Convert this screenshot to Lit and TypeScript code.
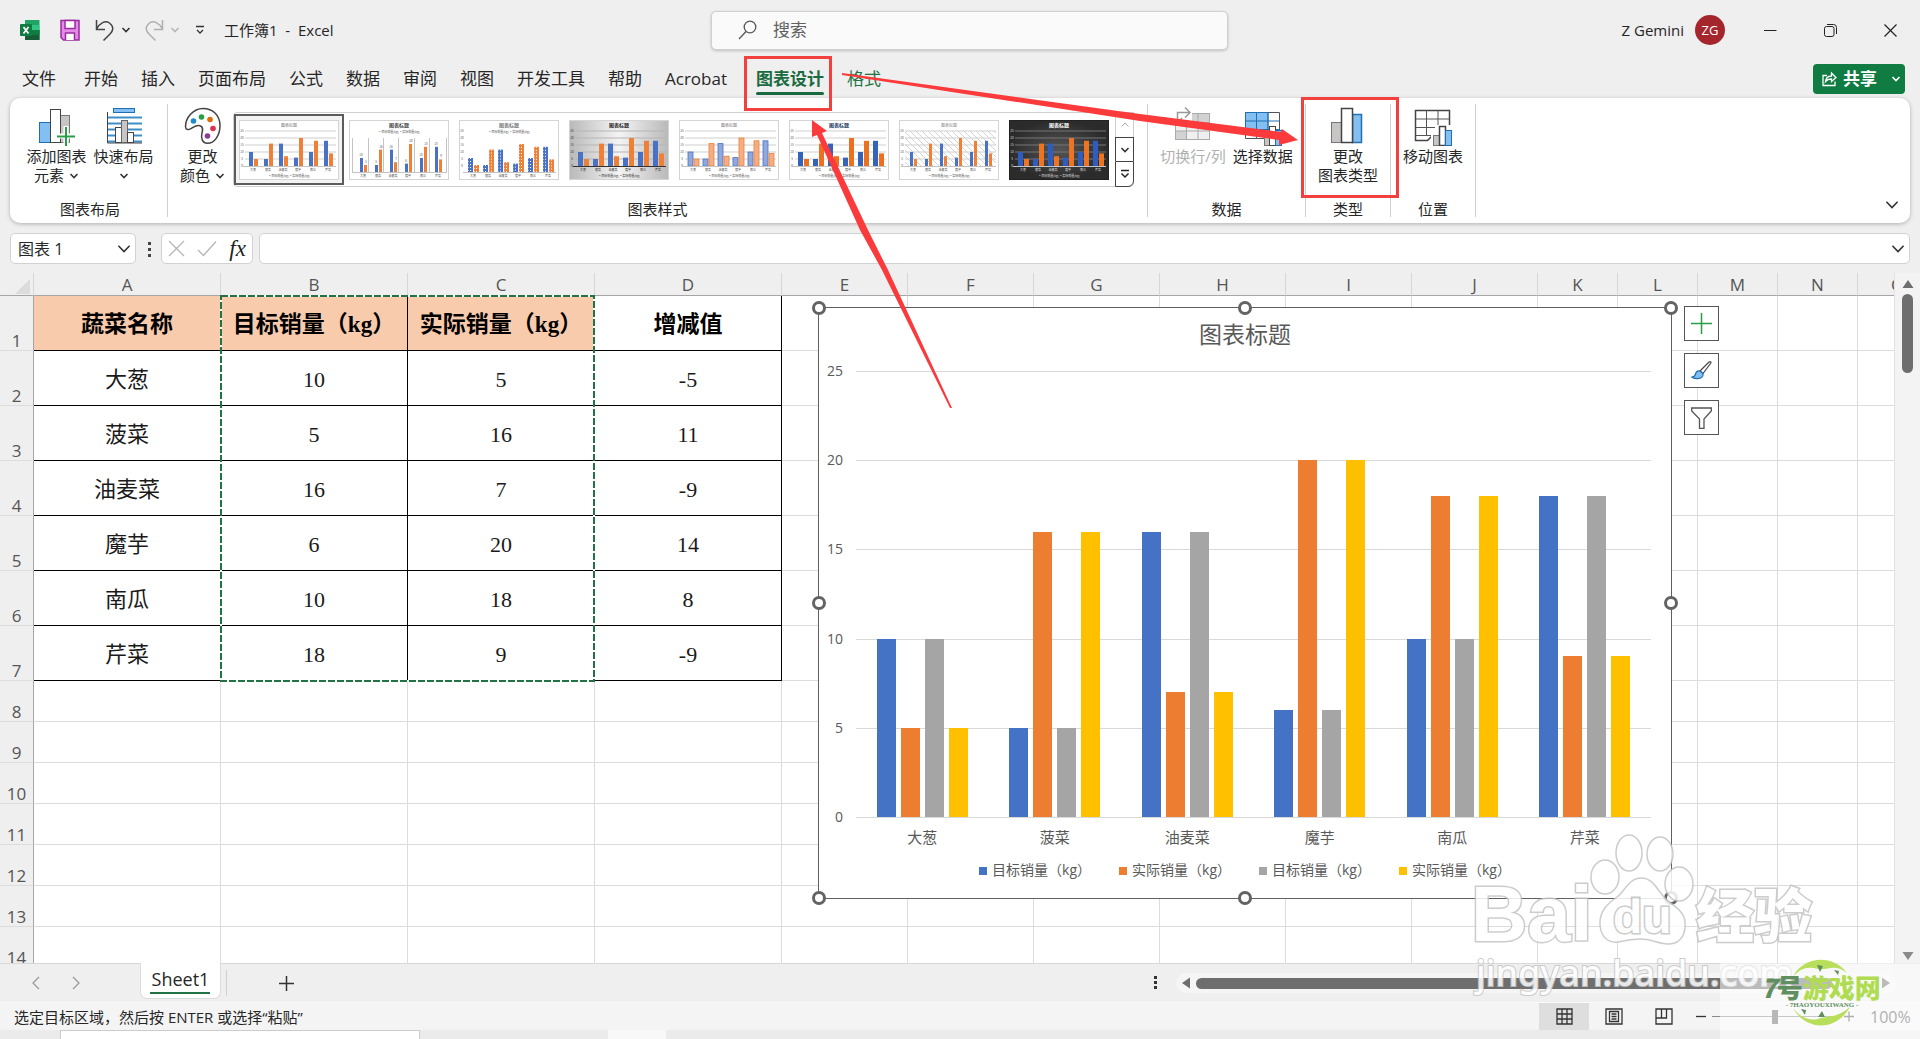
import { LitElement, html, svg, css, nothing } from "lit";
import { customElement, property } from "lit/decorators.js";
import { classMap } from "lit/directives/class-map.js";
import { styleMap } from "lit/directives/style-map.js";

const chevron = (cls = "") => html`<svg class="chev ${cls}" viewBox="0 0 10 10" aria-hidden="true"><path d="M1.5 3 5 6.6 8.5 3" /></svg>`;

const TABS = ["文件", "开始", "插入", "页面布局", "公式", "数据", "审阅", "视图", "开发工具", "帮助", "Acrobat", "图表设计", "格式"];

const ROWS: Array<[string, number, number]> = [
  ["大葱", 10, 5],
  ["菠菜", 5, 16],
  ["油麦菜", 16, 7],
  ["魔芋", 6, 20],
  ["南瓜", 10, 18],
  ["芹菜", 18, 9],
];

const HEADINGS = ["蔬菜名称", "目标销量（kg）", "实际销量（kg）", "增减值"];

const COLUMNS: Array<[string, number]> = [
  ["A", 187], ["B", 187], ["C", 187], ["D", 187],
  ["E", 126], ["F", 126], ["G", 126], ["H", 126], ["I", 126], ["J", 126],
  ["K", 80], ["L", 80], ["M", 80], ["N", 80], ["O", 80],
];

const icons = {
  addElement: svg`
    <rect x="3.5" y="16.5" width="11" height="20" fill="#83c0f1" stroke="#1f6fb5" />
    <rect x="24.5" y="9.5" width="9" height="27" fill="#c8c6c4" stroke="#777" />
    <rect x="14.5" y="3.5" width="10" height="33" fill="#fff" stroke="#444" />
    <path d="M30 20v20M21 30h18" stroke="#fff" stroke-width="5" />
    <path d="M30 21v19M21 30.500h18" stroke="#2a9d48" stroke-width="2" />`,
  quickLayout: svg`
    <path d="M3 11.500h35M3 17.500h35M3 23.500h35M3 29.500h35M3 35.500h35" stroke="#3e8fc9" stroke-width="2" />
    <rect x="9.500" y="2.500" width="21" height="4" fill="#83c0f1" stroke="#1f6fb5" />
    <path d="M3.500 6v31H38" stroke="#444" />
    <rect x="11.500" y="21.500" width="6" height="15" fill="#fff" stroke="#444" />
    <rect x="17.500" y="14.500" width="6" height="22" fill="#c8c6c4" stroke="#666" />
    <rect x="23.500" y="26.500" width="6" height="10" fill="#fff" stroke="#444" />`,
  palette: svg`
    <path d="M20 2.500C10 2.500 2.500 12 2.500 20.500c0 3 2.500 3.800 5 2.400 4-2.300 6-4.300 9.500-3.200 4 1.200 2.500 5 1.800 8.300-.8 4 .2 9.300 5.700 9.300 7 0 12.500-8 12.500-17.800C37 9.500 30 2.500 20 2.500z" fill="#fff" stroke="#444" stroke-width="1.500" />
    <circle cx="10.500" cy="15" r="2.800" fill="#1e8bcd" /><circle cx="18.500" cy="11" r="2.800" fill="#2a9d48" />
    <circle cx="27" cy="13.500" r="2.800" fill="#e36c0a" /><circle cx="30" cy="22.500" r="2.800" fill="#e0304c" />
    <circle cx="24.500" cy="30" r="2.800" fill="#8e3a9d" />`,
  switchRowCol: svg`
    <path d="M2.500 12.500h34v26h-34z" fill="#f0f0f0" stroke="#aaa" transform="translate(0 -5)" />
    <path d="M14 7.500h22.500v9H14zM2.500 25h11v8.500h-11z" fill="#d2d2d2" />
    <path d="M2.500 16.500h34M2.500 25h34M13.500 7.500v26M25 7.500v26M2.500 7.500h34v26h-34z" stroke="#aaa" />
    <path d="M2 3h17v13H2z" fill="#fff" />
    <path d="M4.500 14V6.500H17M12 1.500l5 5-5 5M9 12l-4 4" stroke="#999" stroke-width="1.500" />`,
  selectData: svg`
    <path d="M2.500 6.500h34v26h-34z" fill="#fff" stroke="#555" />
    <path d="M2.500 6.500h22.500v17H2.500z" fill="#83c0f1" stroke="#1f6fb5" />
    <path d="M2.500 15h34M2.500 23.500h34M13.500 6.500v26M25 6.500v26" stroke="#1f6fb5" />
    <rect x="21.500" y="29.500" width="5" height="10" fill="#c8c6c4" stroke="#777" />
    <rect x="26.500" y="20.500" width="6" height="19" fill="#fff" stroke="#444" />
    <rect x="32.500" y="24.500" width="6" height="15" fill="#83c0f1" stroke="#1f6fb5" />`,
  changeType: svg`
    <rect x="3.500" y="16.500" width="10" height="20" fill="#c8c6c4" stroke="#777" />
    <rect x="24.500" y="8.500" width="9" height="28" fill="#83c0f1" stroke="#1f6fb5" stroke-width="1.500" />
    <rect x="13.500" y="2.500" width="11" height="34" fill="#fff" stroke="#444" stroke-width="1.500" />`,
  moveChart: svg`
    <path d="M2.500 4.500h34v25h-17l-5 5h-12z" fill="#fff" stroke="#444" stroke-width="1.500" />
    <path d="M2.500 13h34M2.500 21.500h34M2.500 29.500h17M13.500 4.500v25M25 4.500v25" stroke="#555" />
    <path d="M18 25h4v-6h16v21H18z" fill="#fff" />
    <rect x="20.500" y="29.500" width="6" height="10" fill="#c8c6c4" stroke="#777" />
    <rect x="26.500" y="20.500" width="6" height="19" fill="#fff" stroke="#444" stroke-width="1.500" />
    <rect x="32.500" y="24.500" width="6" height="15" fill="#83c0f1" stroke="#1f6fb5" />`,
};

interface ThumbStyle {
  bg: string; title: string; grid: string; label: string;
  blue: string; orange: string; barWidth: number;
  topLegend?: boolean; vertical?: boolean; dashed?: boolean; hatch?: boolean; noGrid?: boolean; outline?: boolean; bold?: boolean;
}

const BASE: ThumbStyle = { bg: "#ffffff", title: "#777", grid: "#cfcfcf", label: "#555", blue: "#4a72c4", orange: "#ee8137", barWidth: 4 };
const THUMBS: ThumbStyle[] = [
  BASE,
  { ...BASE, topLegend: true, vertical: true, barWidth: 3, bold: true, title: "#444" },
  { ...BASE, topLegend: true, dashed: true, noGrid: true, bold: true, barWidth: 5 },
  { ...BASE, bg: "shade", title: "#222", grid: "#b5b5b5", label: "#333", barWidth: 5, bold: true },
  { ...BASE, blue: "#91a8dc", orange: "#f4ad84", outline: true, barWidth: 5 },
  { ...BASE, title: "#203864", bold: true, barWidth: 5, blue: "#3563b8", orange: "#ed7020" },
  { ...BASE, hatch: true, barWidth: 3, title: "#888" },
  { ...BASE, bg: "dark", title: "#fff", grid: "#777", label: "#ddd", barWidth: 5, bold: true, blue: "#2f5cc0", orange: "#ee7322" },
];

@customElement("chart-thumb")
class ChartThumb extends LitElement {
  @property({ attribute: false }) look: ThumbStyle = BASE;

  static styles = css`
    :host { display: block; width: 100px; height: 60px; }
    svg { display: block; width: 100%; height: 100%; }
    text { font-family: "Noto Sans CJK SC", sans-serif; text-anchor: middle; font-size: 3px; }
    .title { font-size: 4px; }
    .title.bold { font-size: 5px; font-weight: 700; }
  `;

  render() {
    const t = this.look;
    const fill = t.bg === "shade" ? "url(#shade)" : t.bg === "dark" ? "url(#dark)" : t.bg;
    const unit = 1.4;
    const bar = (x: number, v: number, color: string, edge: string) => svg`
      <rect x=${x} y=${46 - v * unit} width=${t.barWidth} height=${v * unit} fill=${color}
        stroke=${t.outline ? edge : "none"} stroke-width="0.8" />
      ${t.dashed ? svg`<path d="M${x} ${46 - v * unit}V46M${x + t.barWidth / 2} ${46 - v * unit}V46" stroke="#fff" stroke-width="1" stroke-dasharray="1 2" />` : nothing}`;
    return html`<svg viewBox="0 0 100 60" aria-hidden="true">
      <defs>
        <linearGradient id="shade" x1="0" x2="1"><stop offset="0" stop-color="#b9b9b9" /><stop offset=".5" stop-color="#f4f4f4" /><stop offset="1" stop-color="#b9b9b9" /></linearGradient>
        <radialGradient id="dark"><stop offset="0" stop-color="#555" /><stop offset="1" stop-color="#2b2b2b" /></radialGradient>
        <pattern id="hatch" width="6" height="6" patternUnits="userSpaceOnUse"><path d="M0 0l6 6" stroke="#c9c9c9" stroke-width="0.8" /></pattern>
      </defs>
      <rect x="0.5" y="0.5" width="99" height="59" fill=${fill} stroke=${t.bg === "dark" ? "#222" : "#d4d4d4"} />
      <text class=${classMap({ title: true, bold: !!t.bold })} x="50" y="7" fill=${t.title}>图表标题</text>
      ${t.topLegend ? svg`<text x="50" y="13" fill=${t.label}>▪目标销量(kg) ▪实际销量(kg)</text>` : svg`<text x="50" y="57" fill=${t.label}>▪目标销量(kg) ▪实际销量(kg)</text>`}
      ${t.hatch ? svg`<rect x="6" y="11" width="91" height="35" fill="url(#hatch)" />` : nothing}
      ${t.vertical || t.noGrid ? nothing : [11, 18, 25, 32, 39].map((y) => svg`<path d="M6 ${y}H97" stroke=${t.grid} />`)}
      ${t.vertical ? [3, 19, 34, 49, 65, 80, 97].map((x) => svg`<path d="M${x}.5 18V53" stroke="#c4c4c4" />`) : nothing}
      ${t.vertical ? nothing : [25, 20, 15, 10, 5, 0].map((v, i) => svg`<text x="3" y=${12 + i * 7} fill=${t.label}>${v}</text>`)}
      <g transform=${t.topLegend ? "translate(0 6)" : "translate(0 0)"}>
        ${ROWS.map(([name, a, b], i) => {
          const cx = 14 + i * 15;
          return svg`${bar(cx - t.barWidth, a, t.blue, "#4a72c4")}${bar(cx + 1, b, t.orange, "#ee8137")}
            ${t.vertical ? svg`<text x=${cx - 2} y=${44 - a * unit} fill=${t.label}>${a}</text><text x=${cx + 3} y=${44 - b * unit} fill=${t.label}>${b}</text>` : nothing}
            <text x=${cx} y="51" fill=${t.label}>${name}</text>`;
        })}
        <path d="M4 46.5H97" stroke=${t.bg === "shade" ? "#333" : "#c4c4c4"} />
      </g>
    </svg>`;
  }
}

@customElement("bar-chart")
class BarChart extends LitElement {
  static styles = css`
    :host {
      display: flex; flex-direction: column; box-sizing: border-box; position: relative;
      border: 1px solid #5f5f5f; background: #fff; color: #595959;
      font: 15px/20px "Open Sans", "Noto Sans CJK SC", sans-serif;
    }
    .title { margin: 0; height: 63px; padding-top: 10px; box-sizing: border-box; font-size: 23px; line-height: 32px; font-weight: 400; text-align: center; }
    .body { flex: 1; display: grid; grid-template-columns: 24px 1fr; column-gap: 13px; padding-right: 20px; min-height: 0; }
    .axis { display: flex; flex-direction: column; justify-content: space-between; text-align: right; margin: -10px 0 -9px; font-size: 14px; }
    .plot { position: relative; display: flex; }
    .lines { position: absolute; inset: 0; display: flex; flex-direction: column; justify-content: space-between; }
    .lines i { height: 1px; background: #d9d9d9; }
    .group { flex: 1; display: flex; justify-content: center; align-items: flex-end; gap: 5px; padding-bottom: 1px; position: relative; }
    .bar { width: 19px; }
    .s0 { background: #4472c4; } .s1 { background: #ed7d31; } .s2 { background: #a5a5a5; } .s3 { background: #ffc000; }
    .cats { display: flex; height: 40px; line-height: 38px; padding: 0 20px 0 37px; }
    .cats span { flex: 1; text-align: center; }
    .legend { list-style: none; margin: 0; padding: 0 0 16px; display: flex; justify-content: center; gap: 28px; font-size: 14px; }
    .legend li { display: flex; align-items: center; gap: 5px; height: 24px; white-space: nowrap; }
    .swatch { width: 8px; height: 8px; margin-top: 2px; }
    .handle { position: absolute; width: 8px; height: 8px; border: 3px solid #636363; border-radius: 50%; background: #fff; transform: translate(-50%, -50%); }
    .l { left: 0; } .c { left: 50%; } .r { left: 100%; }
    .t { top: 0; } .m { top: 50%; } .b { top: 100%; }
  `;

  render() {
    const names = [HEADINGS[1], HEADINGS[2], HEADINGS[1], HEADINGS[2]];
    return html`
      <h2 class="title">图表标题</h2>
      <div class="body">
        <div class="axis">${[25, 20, 15, 10, 5, 0].map((v) => html`<span>${v}</span>`)}</div>
        <div class="plot">
          <div class="lines">${[0, 1, 2, 3, 4, 5].map(() => html`<i></i>`)}</div>
          ${ROWS.map(([, a, b]) => html`<div class="group">
            ${[a, b, a, b].map((v, i) => html`<div class="bar s${i}" style=${styleMap({ height: `${v * 4}%` })}></div>`)}
          </div>`)}
        </div>
      </div>
      <div class="cats">${ROWS.map(([n]) => html`<span>${n}</span>`)}</div>
      <ul class="legend">${names.map((n, i) => html`<li><i class="swatch s${i}"></i>${n}</li>`)}</ul>
      ${["l t", "c t", "r t", "l m", "r m", "l b", "c b", "r b"].map((p) => html`<i class="handle ${p}"></i>`)}
    `;
  }
}

@customElement("app-root")
class AppRoot extends LitElement {
  static styles = css`
    :host {
      display: flex; flex-direction: column; height: 100vh; position: relative; overflow: hidden;
      background: #efefef; color: #262626;
      font: 15px/20px "Open Sans", "Noto Sans CJK SC", sans-serif;
    }
    *, *::before { box-sizing: border-box; }
    button, input { font: inherit; color: inherit; border: 0; background: none; padding: 0; margin: 0; outline: 0; min-width: 0; }
    button { display: inline-flex; align-items: center; justify-content: center; }
    svg { display: block; fill: none; flex: none; }
    .chev { width: 10px; height: 10px; stroke: #333; stroke-width: 1.5; }
    .chev.big { width: 16px; height: 16px; stroke-width: 1; }
    .chev.pale { stroke: #b5b5b5; }
    .chev.white { stroke: #fff; }

    .titlebar { display: grid; grid-template-columns: 711fr 517fr 692fr; align-items: center; height: 60px; flex: none; }
    .quick { display: flex; align-items: center; padding-left: 20px; }
    .quick svg.i20 { width: 20px; height: 22px; }
    .save { margin-left: 20px; }
    .undo, .redo { gap: 6px; margin-left: 15px; }
    .redo { margin-left: 13px; }
    .more { margin: 0 19px 0 15px; }
    .search { display: flex; align-items: center; gap: 16px; height: 39px; padding: 0 26px; background: #fafafa; border: 1px solid #d0d0d0; border-radius: 5px; box-shadow: 0 1px 3px #0003; }
    .search input { flex: 1; font-size: 17px; }
    .search input::placeholder { color: #616161; opacity: 1; }
    .account { display: flex; align-items: center; justify-content: flex-end; }
    .avatar { width: 30px; height: 30px; border-radius: 50%; background: #a4262c; color: #fff; font-size: 13px; display: grid; place-items: center; margin: 0 15px 0 11px; }
    .win { width: 60px; height: 40px; }

    .tabs { display: flex; align-items: center; gap: 23px; height: 38px; padding: 0 15px 0 22px; flex: none; font-size: 17px; line-height: 24px; }
    .tabs .first { margin-right: 5px; }
    .tabs .tab { height: 38px; border-top: 3px solid transparent; border-bottom: 3px solid transparent; white-space: nowrap; }
    .tabs .green { color: #217346; }
    .tabs .active { margin-left: 6px; font-weight: 700; color: #1a6b3f; position: relative; }
    .tabs .active::before { content: ""; position: absolute; left: 0; right: 0; bottom: 0; height: 3px; background: #186b3e; border-radius: 2px; }
    .share { margin-left: auto; height: 30px; padding: 0 4px 0 9px; gap: 6px; background: #107c41; color: #fff; border-radius: 4px; font-weight: 600; }
    .share .chev { margin-left: 8px; }

    .ribbon { display: flex; height: 125px; margin: 0 10px; padding: 6px 0; background: #fff; border-radius: 10px; box-shadow: 0 1px 4px #0004; flex: none; }
    .group { display: flex; flex-direction: column; justify-content: space-between; align-items: center; border-right: 1px solid #d0d0d0; line-height: 19px; }
    .group h2 { margin: 0; font-size: 15px; font-weight: 400; line-height: 16px; }
    .tools { display: flex; justify-content: center; align-items: flex-start; }
    .tool { flex-direction: column; justify-content: flex-start; padding-top: 2px; white-space: nowrap; }
    .tool svg.icon { width: 40px; height: 40px; margin-bottom: 1px; }
    .tool span { display: flex; align-items: center; gap: 5px; height: 19px; }
    .tool:disabled { color: #b0b0b0; }
    .g-layout { width: 158px; padding-left: 3px; } .g-layout .tools { gap: 7px; }
    .g-style { width: 980px; } .g-style .tools { width: 100%; justify-content: flex-start; padding-left: 12px; }
    .g-data { width: 158px; } .g-data .tools { gap: 7px; }
    .g-one { width: 85px; }
    .gallery { display: flex; align-items: center; height: 75px; margin: 8px 0 0 8px; border: 1px solid #cfcfcf; border-radius: 4px; }
    .pick { width: 110px; height: 71px; border: 2px solid transparent; }
    .pick.on { border-color: #5c5c5c; background: #f3f3f3; }
    .scroll { display: flex; flex-direction: column; align-self: stretch; width: 19px; margin: -1px; margin-left: 1px; }
    .scroll button { flex: 1; border: 1px solid #444; border-bottom-width: 0; }
    .scroll button:first-child { border-color: #ccc; }
    .scroll button:last-child { border-bottom-width: 1px; border-radius: 0 0 6px 0; }
    .collapse { margin: auto 10px 4px auto; }

    .formula { display: flex; align-items: center; height: 50px; padding: 1px 10px 0; flex: none; }
    .box { display: flex; align-items: center; height: 31px; background: #fff; border: 1px solid #d2d2d2; border-radius: 5px; }
    .name { width: 126px; padding: 0 3px 0 7px; }
    .name input { flex: 1; font-size: 16px; }
    .dots { margin: 0 8px 0 9px; }
    .fx { width: 92px; justify-content: space-around; margin-right: 6px; }
    .fx .f { font: italic 400 23px/26px "Liberation Serif", serif; color: #222; }
    .bar { flex: 1; padding-right: 3px; }
    .bar input { flex: 1; height: 100%; }

    .work { flex: 1; display: flex; min-height: 0; border-bottom: 1px solid #d8d8d8; }
    .sheet { flex: 1; position: relative; overflow: hidden; background: #fff; min-width: 0; }
    table { border-collapse: separate; border-spacing: 0; table-layout: fixed; width: 0; }
    th, td { padding: 0; }
    thead th { height: 23px; background: #efefef; border-bottom: 1px solid #a6a6a6; border-right: 1px solid #d6d6d6; font-weight: 400; font-size: 17px; line-height: 20px; padding-top: 2px; color: #555; }
    thead .corner { padding: 0; }
    .corner svg { margin: 5px 3px 0 auto; }
    tbody th { background: #efefef; border-right: 1px solid #a6a6a6; border-bottom: 1px solid #dcdcdc; font-weight: 400; font-size: 17px; line-height: 18px; color: #555; vertical-align: bottom; }
    tbody td { border-right: 1px solid #dcdcdc; border-bottom: 1px solid #dcdcdc; text-align: center; }
    .tall { height: 55px; } .short { height: 41px; }
    .cell { border-color: #000; padding-top: 3px; font: 22px/30px "Liberation Serif", "Noto Sans CJK SC", serif; color: #1a1a1a; }
    .head { font-size: 23px; font-weight: 700; color: #000; white-space: nowrap; }
    .peach { background: #f8cbad; }
    .ants { position: absolute; left: 220px; top: 22px; width: 375px; height: 387px; }
    .chart { position: absolute; left: 818px; top: 34px; width: 854px; height: 592px; }
    .side { position: absolute; left: 1684px; top: 33px; display: flex; flex-direction: column; gap: 12px; }
    .side button { width: 35px; height: 35px; background: #fff; border: 1px solid #555; }
    .vscroll { width: 26px; flex: none; display: flex; flex-direction: column; align-items: center; padding: 6px 0 2px; background: #f3f3f3; border-left: 1px solid #e2e2e2; }
    .vthumb { width: 11px; height: 79px; margin-top: 5px; border-radius: 6px; background: #6e6e6e; }
    .vscroll .down { margin-top: auto; }

    .sheets { display: flex; align-items: center; height: 39px; flex: none; border-bottom: 1px solid #fafafa; }
    .nav { width: 40px; height: 30px; }
    .nav:first-child { margin-left: 16px; }
    .sheettab { position: relative; align-self: flex-start; margin: -1px 5px 0 44px; padding-bottom: 4px; width: 81px; height: 36px; background: #fff; border: 1px solid #dcdcdc; border-top: 0; border-radius: 0 0 7px 7px; font-size: 18px; line-height: 24px; }
    .sheettab::before { content: ""; position: absolute; left: 9px; right: 10px; bottom: 4px; height: 2px; background: #217346; }
    .split { width: 1px; height: 26px; background: #d0d0d0; }
    .add { margin-left: 48px; width: 22px; height: 30px; }
    .grip { margin-left: auto; }
    .hscroll { display: flex; align-items: center; width: 720px; height: 20px; margin: 0 24px 0 18px; padding: 0 6px; gap: 6px; background: #f5f5f5; border-radius: 10px; }
    .hthumb { flex: none; width: 636px; height: 11px; border-radius: 6px; background: #6e6e6e; }
    .hscroll .right { margin-left: auto; }

    .status { display: flex; align-items: center; height: 27px; padding: 0 10px 0 14px; background: #f4f4f4; flex: none; }
    .views { display: flex; margin-left: auto; }
    .views button { width: 50px; height: 27px; }
    .views .on { background: #dedede; }
    .zoombar { display: flex; align-items: center; gap: 6px; margin-left: 7px; }
    .zoombar input { appearance: none; width: 126px; height: 16px; background: linear-gradient(#8a8a8a, #8a8a8a) center / 100% 1px no-repeat; }
    .zoombar input::-webkit-slider-thumb { appearance: none; width: 6px; height: 14px; background: #666; }
    .pct { width: 40px; margin-left: 10px; text-align: right; font-size: 16px; color: #555; }
    .task { display: flex; height: 9px; overflow: hidden; background: #ebebeb; flex: none; }
    .task .find { width: 360px; margin-left: 60px; background: #fff; border: 1px solid #ccc; border-bottom: 0; }
    .task .app { width: 58px; margin-left: 188px; background: #f8f8f8; }

    .marks { position: absolute; left: 0; top: 0; width: 1700px; height: 420px; pointer-events: none; }
    .baidu { position: absolute; right: 0; bottom: 0; width: 450px; height: 209px; pointer-events: none; opacity: .85; }
    .baidu text { font-weight: 900; font-family: "Liberation Sans", "Noto Sans CJK SC", sans-serif; paint-order: stroke; }
    .baidu .url { font: 500 36px "Noto Sans", sans-serif; stroke-width: 2; }
    .veil { position: absolute; right: 0; bottom: 0; width: 200px; height: 76px; background: #fff8; pointer-events: none; }
    .seven { position: absolute; right: 30px; bottom: 10px; width: 140px; height: 74px; pointer-events: none; }
    .seven text { font-family: "Noto Sans CJK SC", sans-serif; font-weight: 900; }
    .seven .latin { font: 700 7px "Liberation Serif", serif; }
  `;

  private tool(icon: unknown, line1: string, line2: string | null = null, drop = false, disabled = false) {
    return html`<button class="tool" ?disabled=${disabled}>
      <svg class="icon" viewBox="0 0 40 40" aria-hidden="true">${icon}</svg>
      <span>${line1}</span>
      ${line2 === null ? nothing : html`<span>${line2}${drop ? chevron() : nothing}</span>`}
    </button>`;
  }

  private titlebar() {
    return html`<header class="titlebar">
      <div class="quick">
        <svg class="i20" viewBox="0 0 20 22" aria-label="Excel">
          <path d="M5 1h14.500v20H5z" fill="#21a366" /><path d="M5 11h14.500v10H5z" fill="#185c37" /><path d="M12 6h7.500v5H12z" fill="#33c481" /><path d="M12 11h7.500v5H12z" fill="#107c41" />
          <rect x="0" y="5" width="12" height="12" rx="1" fill="#107c41" /><path d="M3.500 8l5 6.500M8.500 8l-5 6.500" stroke="#fff" stroke-width="1.800" />
        </svg>
        <button class="save" aria-label="保存"><svg class="i20" viewBox="0 0 20 22"><path d="M1 1.500h18v19.500H3.500L1 18.500z" fill="#e38be8" stroke="#9a2ca0" stroke-width="1.500" /><path d="M5 1.500h10v8H5zM5.500 21v-7h9v7" fill="#fff" stroke="#9a2ca0" stroke-width="1.500" /></svg></button>
        <button class="undo" aria-label="撤消"><svg class="i20" viewBox="0 0 20 22"><path d="M1.500 1v9.500H10M1.500 10C5 4 10 1 14.500 4c5 4 3.500 8 .5 11l-6.500 6.500" stroke="#444" stroke-width="1.500" /></svg>${chevron()}</button>
        <button class="redo" aria-label="恢复"><svg class="i20" viewBox="0 0 20 22"><path d="M18.500 1v9.500H10M18.500 10C15 4 10 1 5.500 4c-5 4-3.500 8-.5 11l6.500 6.500" stroke="#b0b0b0" stroke-width="1.500" /></svg>${chevron("pale")}</button>
        <button class="more" aria-label="自定义快速访问工具栏"><svg width="10" height="10" viewBox="0 0 10 10" stroke="#333" stroke-width="1.300"><path d="M1 1.500h8M2 5l3 3 3-3" /></svg></button>
        <span>工作簿1&nbsp; -&nbsp; Excel</span>
      </div>
      <label class="search">
        <svg width="19" height="20" viewBox="0 0 19 20" stroke="#555" stroke-width="1.300" aria-hidden="true"><circle cx="12" cy="7" r="5.800" /><path d="M8 11.500 1 19" /></svg>
        <input type="text" placeholder="搜索" aria-label="搜索" />
      </label>
      <div class="account">
        <span>Z Gemini</span><span class="avatar">ZG</span>
        <button class="win" aria-label="最小化"><svg width="13" height="13" viewBox="0 0 13 13" stroke="#222"><path d="M0 6.500h12.500" /></svg></button>
        <button class="win" aria-label="还原"><svg width="13" height="13" viewBox="0 0 13 13" stroke="#222"><rect x=".5" y="2.500" width="9.500" height="10" rx="2" /><path d="M3 .5h6.500q3 0 3 3V10" /></svg></button>
        <button class="win" aria-label="关闭"><svg width="13" height="13" viewBox="0 0 13 13" stroke="#222" stroke-width="1.200"><path d="M.5.5l12 12M12.500.5l-12 12" /></svg></button>
      </div>
    </header>`;
  }

  private ribbon() {
    return html`<section class="ribbon">
      <div class="group g-layout">
        <div class="tools">${this.tool(icons.addElement, "添加图表", "元素", true)}${this.tool(icons.quickLayout, "快速布局", "", true)}</div>
        <h2>图表布局</h2>
      </div>
      <div class="group g-style">
        <div class="tools">
          ${this.tool(icons.palette, "更改", "颜色", true)}
          <div class="gallery">
            ${THUMBS.map((t, i) => html`<button class=${classMap({ pick: true, on: i === 0 })} aria-label="样式 ${i + 1}"><chart-thumb .look=${t}></chart-thumb></button>`)}
            <div class="scroll">
              <button aria-label="上一行"><svg width="10" height="10" viewBox="0 0 10 10" stroke="#aaa"><path d="M1.500 6.500 5 3l3.500 3.500" /></svg></button>
              <button aria-label="下一行">${chevron()}</button>
              <button aria-label="其他"><svg width="10" height="10" viewBox="0 0 10 10" stroke="#222" stroke-width="1.500"><path d="M1 1.500h8M1.500 4.500 5 8l3.500-3.500" /></svg></button>
            </div>
          </div>
        </div>
        <h2>图表样式</h2>
      </div>
      <div class="group g-data">
        <div class="tools">${this.tool(icons.switchRowCol, "切换行/列", null, false, true)}${this.tool(icons.selectData, "选择数据")}</div>
        <h2>数据</h2>
      </div>
      <div class="group g-one"><div class="tools">${this.tool(icons.changeType, "更改", "图表类型")}</div><h2>类型</h2></div>
      <div class="group g-one"><div class="tools">${this.tool(icons.moveChart, "移动图表")}</div><h2>位置</h2></div>
      <button class="collapse" aria-label="折叠功能区">${chevron("big")}</button>
    </section>`;
  }

  private grid() {
    const rest = COLUMNS.slice(4);
    const fill = (from: number) => COLUMNS.slice(from).map(() => html`<td></td>`);
    return html`<table>
      <colgroup><col width="34" />${COLUMNS.map(([, w]) => html`<col width=${w} />`)}</colgroup>
      <thead><tr>
        <th class="corner" aria-label="全选"><svg width="15" height="15" viewBox="0 0 15 15"><path d="M15 0v15H0z" fill="#dcdcdc" /></svg></th>
        ${COLUMNS.map(([n]) => html`<th scope="col">${n}</th>`)}
      </tr></thead>
      <tbody>
        <tr class="tall"><th scope="row">1</th>
          ${HEADINGS.map((h, i) => html`<td class=${classMap({ cell: true, head: true, peach: i < 3 })}>${h}</td>`)}
          ${rest.map(() => html`<td></td>`)}
        </tr>
        ${ROWS.map(([n, a, b], i) => html`<tr class="tall"><th scope="row">${i + 2}</th>
          <td class="cell">${n}</td><td class="cell">${a}</td><td class="cell">${b}</td><td class="cell">${b - a}</td>${fill(4)}
        </tr>`)}
        ${[8, 9, 10, 11, 12, 13, 14].map((r) => html`<tr class="short"><th scope="row">${r}</th>${fill(0)}</tr>`)}
      </tbody>
    </table>`;
  }

  private marks() {
    return html`<svg class="marks" viewBox="0 0 1700 420" aria-hidden="true">
      <g fill="#fb3a3c">
        <path d="M842 73 1140 114 1281 132 1282 129 1298 140 1279 145 1279 140 1140 121 842 75z" />
        <path d="M812 120 827 131 822 133 868 230 888 270 952 408 950 408 882 270 860 230 817 135 812 137z" />
      </g>
      <g stroke="#f2403f" stroke-width="3"><rect x="745.5" y="57.5" width="85" height="52" /><rect x="1302.5" y="98.500" width="95" height="98" /></g>
    </svg>
    <svg class="baidu" viewBox="0 0 450 209" aria-hidden="true">
      <g fill="#fff" stroke="#c4c4c4" stroke-width="1.500">
        <ellipse cx="135" cy="47" rx="14" ry="17" /><ellipse cx="159" cy="23" rx="13" ry="18" />
        <ellipse cx="190" cy="24" rx="13" ry="17" /><ellipse cx="209" cy="54" rx="14" ry="17" />
        <path d="M171 48C159 48 155 61 147 67 137 74 129 82 130 95 131 108 139 113 148 112 157 110 163 109 171 109 181 109 189 114 200 114 211 113 216 104 215 92 214 81 204 76 197 70 187 61 184 48 171 48z" />
      </g>
      <g fill="#fff" stroke="#c4c4c4" stroke-width="3">
        <text x="1" y="111" font-size="78">Bai</text>
        <text x="143" y="103" font-size="48">du</text>
        <text x="226" y="107" font-size="58">经验</text>
        <text class="url" x="6" y="156">jingyan.baidu.com</text>
      </g>
    </svg>
    <div class="veil"></div>
    <svg class="seven" viewBox="0 0 140 74" aria-hidden="true">
      <path d="M43 22C52 2 82-2 97 18 84 8 78 16 68 14 58 11 50 13 43 22z" fill="#b8df5c" />
      <path d="M43 53C55 75 85 78 100 52 86 64 78 60 68 64 58 66 50 62 43 53z" fill="#b8df5c" />
      <path d="M67 10l6 1-3 6zM84 15l5 1-1 4zM51 54l5 1-1 5zM68 62l4-6 3 6z" fill="#5f8f5f" />
      <text x="11" y="43" font-size="26" fill="#5f8f5f"><tspan font-style="italic">7</tspan>号<tspan fill="#b0dc52">游戏网</tspan></text>
      <text class="latin" x="72" y="52" text-anchor="middle" fill="#5f8f5f">- 7HAOYOUXIWANG -</text>
    </svg>`;
  }

  render() {
    const last = TABS.length - 1;
    return html`
      ${this.titlebar()}
      <nav class="tabs">
        ${TABS.map((t, i) => html`<button class=${classMap({ tab: true, first: i === 0, active: i === last - 1, green: i === last })}>${t}</button>`)}
        <button class="share"><svg width="15" height="16" viewBox="0 0 15 16" stroke="#fff" stroke-width="1.300"><path d="M5 4.500H1v10h12v-4M3.500 10.500c.5-4 3-5.500 6-5.500V2l4.500 4.500-4.500 4V8C7 8 5 8.500 3.500 10.500z" /></svg>共享${chevron("white")}</button>
      </nav>
      ${this.ribbon()}
      <div class="formula">
        <div class="box name"><input type="text" aria-label="名称框" value="图表 1" /><button aria-label="名称列表">${chevron("big")}</button></div>
        <svg class="dots" width="8" height="16" viewBox="0 0 8 16" fill="#444"><path d="M3 1h3v3H3zM3 7h3v3H3zM3 13h3v3H3z" fill="#444" /></svg>
        <div class="box fx">
          <button aria-label="取消"><svg width="17" height="17" viewBox="0 0 17 17" stroke="#b5b5b5" stroke-width="1.300"><path d="M1 1l15 15M16 1 1 16" /></svg></button>
          <button aria-label="输入"><svg width="20" height="17" viewBox="0 0 20 17" stroke="#b5b5b5" stroke-width="1.300"><path d="M1 10l5.500 5.500L19 1.500" /></svg></button>
          <button class="f" aria-label="插入函数">fx</button>
        </div>
        <div class="box bar"><input type="text" aria-label="编辑栏" /><button aria-label="展开编辑栏">${chevron("big")}</button></div>
      </div>
      <main class="work">
        <div class="sheet">
          ${this.grid()}
          <svg class="ants" viewBox="0 0 375 387" aria-hidden="true"><rect x="1" y="1" width="373" height="385" stroke="#fff" stroke-width="2" /><rect x="1" y="1" width="373" height="385" stroke="#217346" stroke-width="2" stroke-dasharray="7 2" /></svg>
          <bar-chart class="chart"></bar-chart>
          <div class="side">
            <button aria-label="图表元素"><svg width="21" height="21" viewBox="0 0 21 21" stroke="#2a9d48" stroke-width="1.500"><path d="M10.500 0v21M0 10.500h21" /></svg></button>
            <button aria-label="图表样式"><svg width="21" height="21" viewBox="0 0 21 21"><path d="M9 11 18 2c1.500-1 2.500 0 1.500 1.500L12 13.500z" fill="#fff" stroke="#444" stroke-width="1.200" /><path d="M9 11c-3-.5-4 1-4.500 3C4 16 2.500 17 1 17.200c3 2 9 2 10.500-.7.500-1 .6-2 .5-3z" fill="#83c0f1" stroke="#1f6fb5" stroke-width="1.200" /></svg></button>
            <button aria-label="图表筛选器"><svg width="21" height="22" viewBox="0 0 21 22"><path d="M.7 1h19.600v3L13 12v9.300H8.500V12L.7 4z" stroke="#555" stroke-width="1.300" /></svg></button>
          </div>
        </div>
        <div class="vscroll">
          <svg width="12" height="10" viewBox="0 0 12 10"><path d="M6 1l5.500 8H.5z" fill="#6e6e6e" /></svg>
          <div class="vthumb"></div>
          <svg class="down" width="12" height="10" viewBox="0 0 12 10"><path d="M6 9 .5 1h11z" fill="#8a8a8a" /></svg>
        </div>
      </main>
      <div class="sheets">
        <button class="nav" aria-label="上一张"><svg width="8" height="14" viewBox="0 0 8 14" stroke="#999" stroke-width="1.300"><path d="M7 1 1 7l6 6" /></svg></button>
        <button class="nav" aria-label="下一张"><svg width="8" height="14" viewBox="0 0 8 14" stroke="#999" stroke-width="1.300"><path d="M1 1l6 6-6 6" /></svg></button>
        <button class="sheettab">Sheet1</button><i class="split"></i>
        <button class="add" aria-label="新工作表"><svg width="15" height="15" viewBox="0 0 15 15" stroke="#333" stroke-width="1.500"><path d="M7.500 0v15M0 7.500h15" /></svg></button>
        <svg class="grip" width="4" height="14" viewBox="0 0 4 14"><path d="M0 0h3v3H0zM0 5h3v3H0zM0 10h3v3H0z" fill="#333" /></svg>
        <div class="hscroll">
          <svg width="8" height="12" viewBox="0 0 8 12"><path d="M0 6l8-5.500v11z" fill="#6e6e6e" /></svg>
          <div class="hthumb"></div>
          <svg class="right" width="8" height="12" viewBox="0 0 8 12"><path d="M8 6 0 .5v11z" fill="#6e6e6e" /></svg>
        </div>
      </div>
      <footer class="status">
        <span>选定目标区域，然后按 ENTER 或选择“粘贴”</span>
        <div class="views">
          <button class="on" aria-label="普通"><svg width="17" height="17" viewBox="0 0 17 17" stroke="#333" stroke-width="1.300"><path d="M1 1h15v15H1zM1 6h15M1 11h15M6 1v15M11 1v15" /></svg></button>
          <button aria-label="页面布局"><svg width="18" height="17" viewBox="0 0 18 17" stroke="#333" stroke-width="1.300"><path d="M1 1h16v15H1zM4.500 3.500h9v10h-9zM6.500 6h5M6.500 8.500h5M6.500 11h5" /></svg></button>
          <button aria-label="分页预览"><svg width="18" height="17" viewBox="0 0 18 17" stroke="#333" stroke-width="1.300"><path d="M1 1h16v15H1zM1 10h10.500V1M6.500 1v9" /></svg></button>
        </div>
        <div class="zoombar">
          <button aria-label="缩小"><svg width="10" height="11" viewBox="0 0 10 11" stroke="#333" stroke-width="1.300"><path d="M0 5.500h10" /></svg></button>
          <input type="range" min="0" max="100" value="50" aria-label="缩放" />
          <button aria-label="放大"><svg width="10" height="11" viewBox="0 0 10 11" stroke="#555" stroke-width="1.300"><path d="M0 5.500h10M5 .5v10" /></svg></button>
          <span class="pct">100%</span>
        </div>
      </footer>
      <div class="task"><div class="find"></div><div class="app"></div></div>
      ${this.marks()}
    `;
  }
}
